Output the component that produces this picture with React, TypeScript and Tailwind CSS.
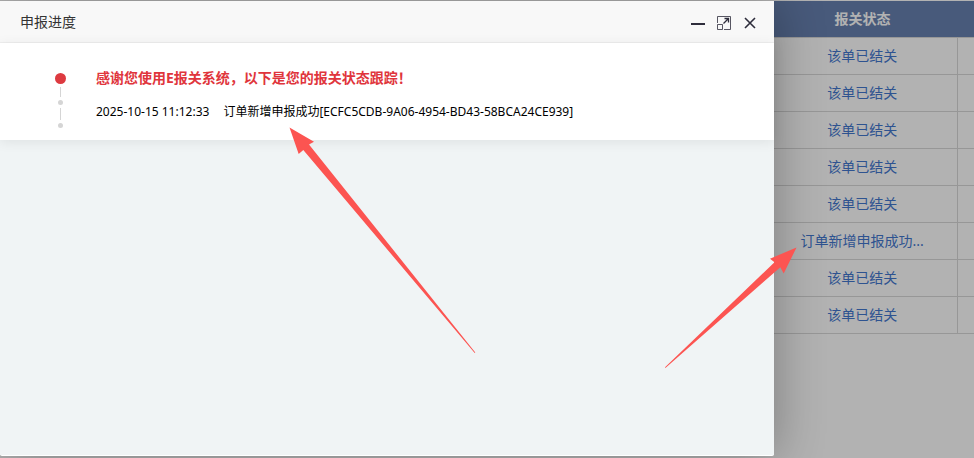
const customsStatuses = [
  '该单已结关',
  '该单已结关',
  '该单已结关',
  '该单已结关',
  '该单已结关',
  '订单新增申报成功...',
  '该单已结关',
  '该单已结关',
]

const progress = {
  title: '感谢您使用E报关系统，以下是您的报关状态跟踪！',
  time: '2025-10-15 11:12:33',
  message: '订单新增申报成功[ECFC5CDB-9A06-4954-BD43-58BCA24CE939]',
}

function StatusTable() {
  return (
    <table className="ml-auto mt-px w-[206px] table-fixed border-collapse text-sm">
      <thead>
        <tr className="h-[36px] border-b border-[#d8d8d8] bg-[#6782b1] text-white">
          <th className="w-[189px] p-0 font-bold">报关状态</th>
          <th className="p-0" aria-label="操作"></th>
        </tr>
      </thead>
      <tbody>
        {customsStatuses.map((status, i) => (
          <tr key={i} className="h-[37px] border-b border-[#d8d8d8]">
            <td className="border-r border-[#d8d8d8] p-0 text-center">
              <a href="#" className="text-[#4377cf]">{status}</a>
            </td>
            <td className="p-0"></td>
          </tr>
        ))}
      </tbody>
    </table>
  )
}

function DialogHeader() {
  return (
    <header className="flex h-[42px] shrink-0 items-center justify-between border-b border-[#eeeeee] bg-[#f8f8f8] pl-5 pr-[17px]">
      <h2 className="text-sm text-[#333]">申报进度</h2>
      <div className="flex items-center gap-3 text-[#2e2d3c]">
        <button type="button" aria-label="最小化">
          <svg className="block" width="14" height="16" viewBox="0 0 14 16">
            <path d="M0 10h14" stroke="currentColor" strokeWidth="2" />
          </svg>
        </button>
        <button type="button" aria-label="最大化">
          <svg className="block" width="14" height="16" viewBox="0 0 14 16" fill="none" stroke="currentColor">
            <path d="M0.5 9V2.5H13.5V15.5H7" opacity="0.8" />
            <path d="M0.5 10.5h5v5h-5z" opacity="0.8" />
            <path d="M6.5 9.5L11 5M7.5 4.5h4v4" strokeWidth="1.3" />
          </svg>
        </button>
        <button type="button" aria-label="关闭">
          <svg className="block" width="14" height="16" viewBox="0 0 14 16">
            <path d="M2 4l10 10M12 4L2 14" stroke="currentColor" strokeWidth="1.6" />
          </svg>
        </button>
      </div>
    </header>
  )
}

function ProgressCard() {
  return (
    <section className="flex gap-[30px] bg-white pb-3 pl-[55px] pt-[25px] shadow-[0_2px_12px_rgba(0,0,0,0.08)]">
      {/* Timeline marks */}
      <div className="flex w-[11px] flex-col items-center gap-[3px] pt-[5px]">
        <span className="size-[11px] rounded-full bg-[#dd3a40]" />
        <span className="h-[10px] w-px bg-[#d5d5d5]" />
        <span className="size-[5px] rounded-full bg-[#d5d5d5]" />
        <span className="h-[12px] w-px bg-[#d5d5d5]" />
        <span className="size-[5px] rounded-full bg-[#d5d5d5]" />
      </div>
      <div>
        <h3 className="text-sm font-bold text-[#e0353c]">{progress.title}</h3>
        <p className="mt-[14px] flex gap-[14px] text-xs leading-5 text-black">
          <time>{progress.time}</time>
          <span>{progress.message}</span>
        </p>
      </div>
    </section>
  )
}

function Arrows() {
  return (
    <svg className="pointer-events-none absolute inset-0 size-full" fill="#fc5451" aria-hidden="true">
      <path d="M289.5 127.5L314 141.7L309 144.5L475.3 352.5L474.7 353L303.3 150L298.7 154Z" />
      <path d="M796.5 247.5L770 258.7L774.5 262.3L665 367.3L665.4 368L780.3 267.3L783.7 273.5Z" />
    </svg>
  )
}

export default function App() {
  return (
    <div className="relative flex h-screen flex-col overflow-hidden bg-white font-['Noto_Sans','Noto_Sans_CJK_SC',sans-serif]">
      <StatusTable />
      <div className="absolute inset-0 bg-black/30" />
      <div
        role="dialog"
        aria-label="申报进度"
        className="absolute bottom-[2px] left-0 right-[200px] top-px flex flex-col rounded-[2px] bg-white pb-px shadow-[1px_1px_50px_rgba(0,0,0,0.3)]"
      >
        <DialogHeader />
        <div className="flex-1 bg-[#f0f4f5]">
          <ProgressCard />
        </div>
      </div>
      <Arrows />
    </div>
  )
}
